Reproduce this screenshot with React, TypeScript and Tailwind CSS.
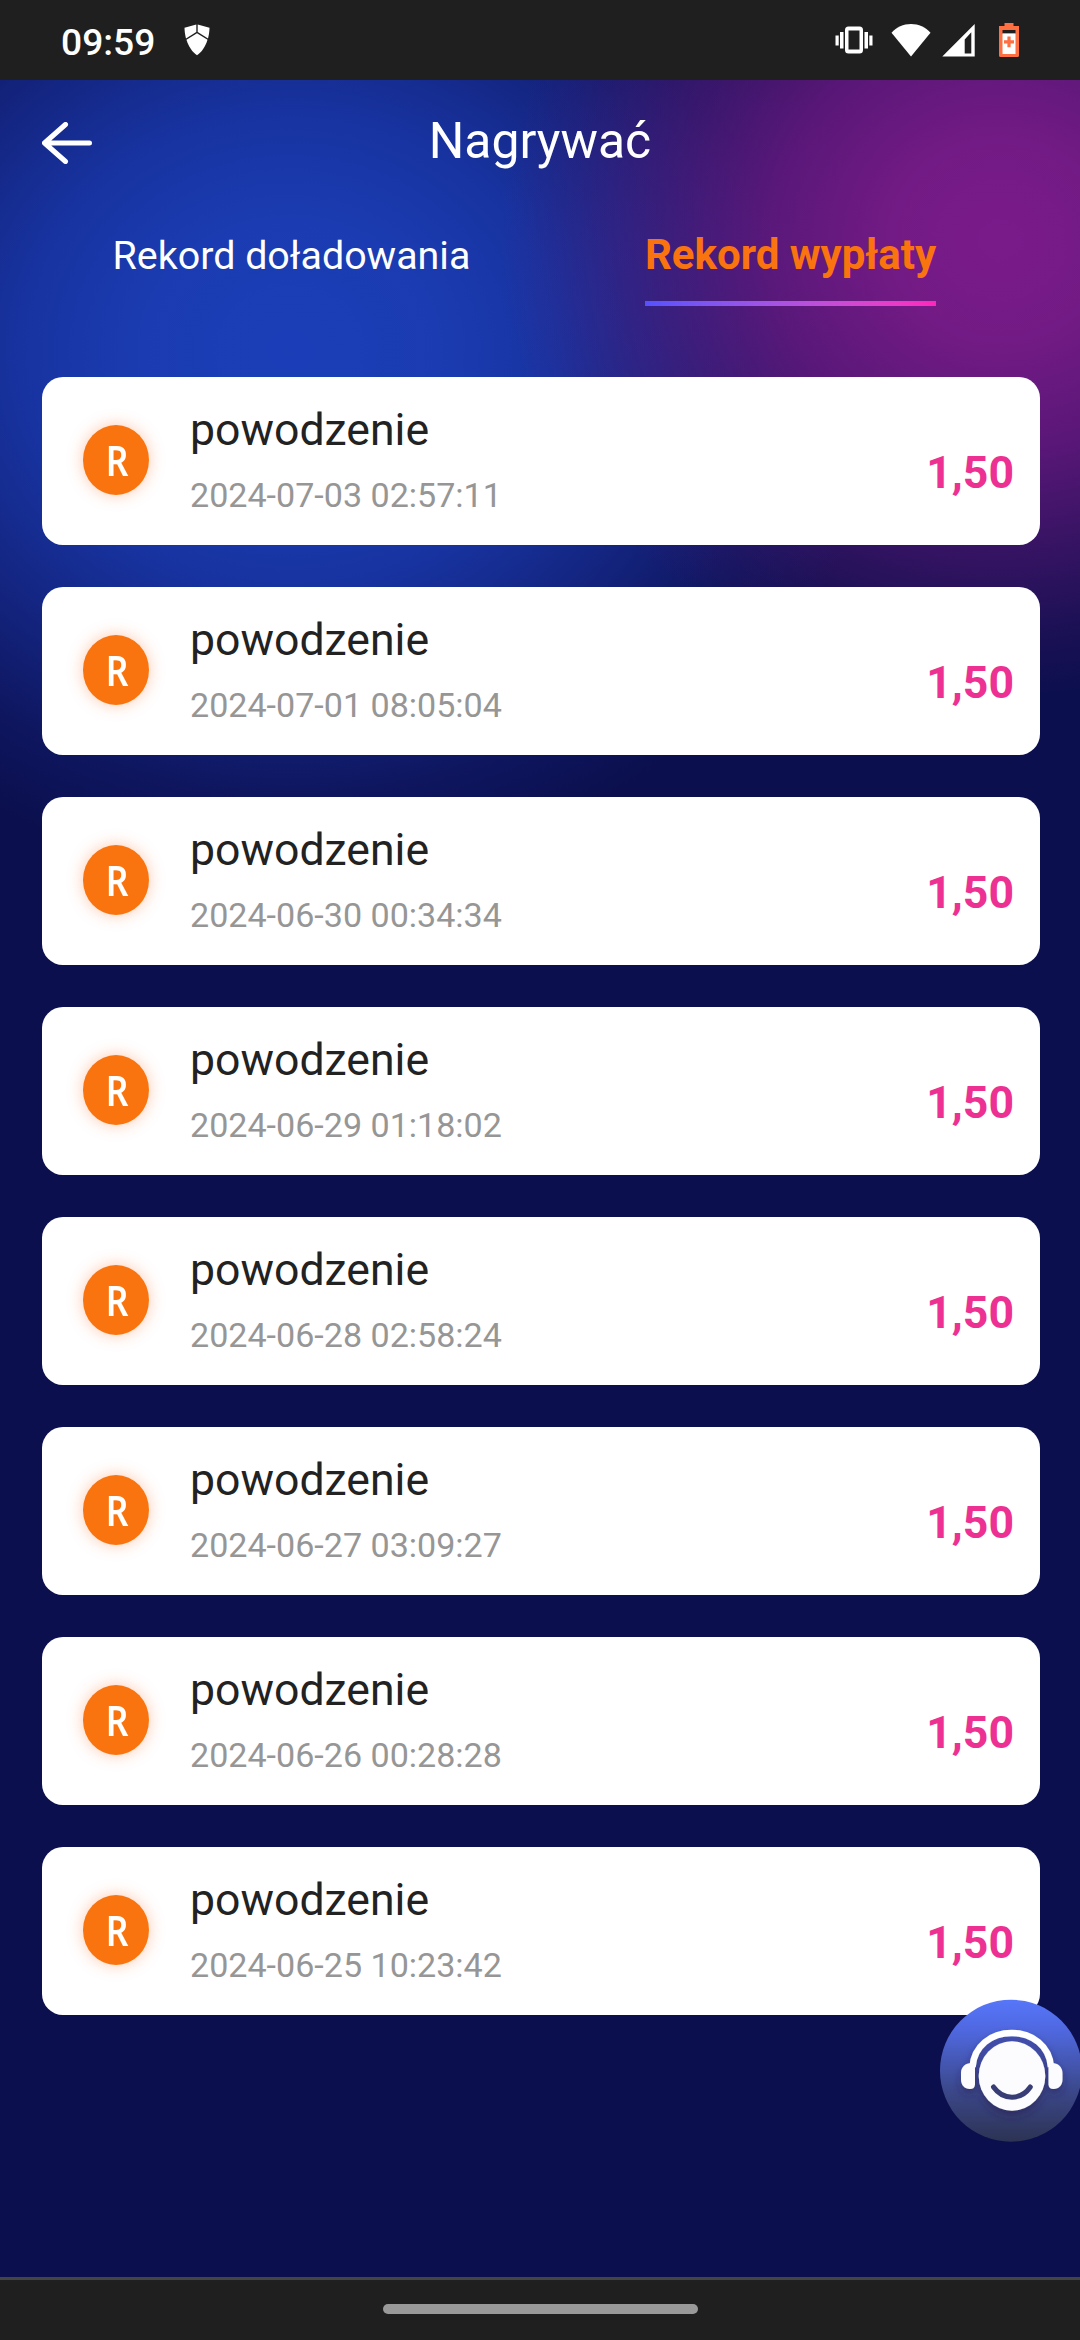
const records = [
  '2024-07-03 02:57:11',
  '2024-07-01 08:05:04',
  '2024-06-30 00:34:34',
  '2024-06-29 01:18:02',
  '2024-06-28 02:58:24',
  '2024-06-27 03:09:27',
  '2024-06-26 00:28:28',
  '2024-06-25 10:23:42',
];

function StatusBar() {
  return (
    <div className="flex h-[80px] shrink-0 items-center bg-[#1f1f1f] pl-[61px] text-white">
      <span className="w-[123px] pt-[3px] text-[37.2px] leading-[80px] font-medium">09:59</span>
      <svg className="h-[32px] w-[26px]" viewBox="0 0 26 32" fill="#fff">
        <path d="M12.3 0.4V8L2 14.4C1 10.800 0.600 7 0.500 3.800Z" />
        <path d="M13.700 0.400V8L24 14.400C25 10.800 25.400 7 25.500 3.800Z" />
        <path d="M13 9.300L23.500 15.700C21.300 23 17.500 28 13 31.300C8.500 28 4.700 23 2.500 15.700Z" />
      </svg>
      <svg className="ml-auto h-[28px] w-[38px]" viewBox="0 0 38 28" fill="#fff">
        <path d="M13.500 0.500h11a3.500 3.500 0 0 1 3.500 3.500v20a3.500 3.500 0 0 1-3.500 3.500h-11a3.500 3.500 0 0 1-3.500-3.500V4a3.500 3.500 0 0 1 3.500-3.500ZM13.500 4.500v19h11V4.500Z" fillRule="evenodd" />
        <rect x="5" y="6" width="3.500" height="16.500" />
        <rect x="0.500" y="9.500" width="3.200" height="10" />
        <rect x="29.500" y="6" width="3.500" height="16.500" />
        <rect x="34.300" y="9.500" width="3.200" height="10" />
      </svg>
      <svg className="ml-[18px] h-[34px] w-[40px]" viewBox="0 0 40 34" fill="#fff">
        <path d="M20 33.500L0.500 9.800C5.500 4.300 12.300 1 20 1S34.500 4.300 39.500 9.800Z" />
      </svg>
      <svg className="ml-[11px] h-[34px] w-[33px]" viewBox="0 0 33 34" fill="#fff">
        <path d="M0.300 33.500L32.700 1V33.500ZM22.700 16.500V30.500H29.300V9.300Z" fillRule="evenodd" />
      </svg>
      <svg className="mr-[61px] ml-[24px] h-[34px] w-[20px]" viewBox="0 0 20 34">
        <path d="M5.500 0h9v3H20v29.500q0 1.500-1.500 1.500h-17Q0 34 0 32.500V3H5.500Z" fill="#fe6f42" />
        <rect x="3.500" y="7" width="13" height="3.500" fill="#1f1f1f" />
        <rect x="3.500" y="10.500" width="13" height="20.500" fill="#fff" />
        <path d="M8.400 13.500h3.200v3.700H15v3.200h-3.400v3.800H8.400v-3.800H5v-3.200h3.400Z" fill="#fe6f42" />
      </svg>
    </div>
  );
}

function Header() {
  return (
    <div className="grid h-[123px] grid-cols-[1fr_auto_1fr] items-center px-[42px] text-white">
      <svg className="mt-[3px] h-[42px] w-[50px]" viewBox="0 0 50 42" fill="none" stroke="#fff" strokeWidth="5" strokeLinecap="round" strokeLinejoin="round">
        <path d="M23.500 2.500L2.500 21L23.500 39.500M4 21H47.500" />
      </svg>
      <h1 className="pb-[2px] text-[49.9px] leading-[60px]">Nagrywać</h1>
    </div>
  );
}

function Tabs() {
  return (
    <div className="mx-[42px] flex h-[103px] w-[998px] text-white">
      <div className="flex flex-1 justify-center text-[39.4px] leading-[105px]">Rekord doładowania</div>
      <div className="flex flex-1 justify-center">
        <div className="flex h-[103px] flex-col text-[42px] leading-[98px] font-bold text-[#f9740e]">
          <span className="h-[98px] pt-[3px]">Rekord wypłaty</span>
          <span className="h-[5px] shrink-0 bg-linear-to-r from-[#5551ff] to-[#ff24bd]" />
        </div>
      </div>
    </div>
  );
}

function RecordCard({ date }: { date: string }) {
  return (
    <div className="flex h-[168px] w-[998px] shrink-0 rounded-[21px] bg-white">
      <div className="mt-[48px] ml-[41px] flex h-[70px] w-[66px] items-center justify-center rounded-[50%] bg-[#f9740e] pl-[3px] font-['Noto_Sans'] text-[41px] leading-[70px] font-semibold text-white shadow-[0_0_16px_rgba(249,100,30,0.35)]">
        <span className="scale-x-[0.86]">R</span>
      </div>
      <div className="ml-[41px] flex flex-1 flex-col pt-[23px]">
        <span className="text-[44.600px] leading-[60px] text-[#222222]">powodzenie</span>
        <span className="mt-[10px] text-[34.1px] leading-[50px] text-[#969696]">{date}</span>
      </div>
      <span className="mt-[66px] mr-[26px] text-[44.600px] leading-[60px] font-bold text-[#ed3192]">1,50</span>
    </div>
  );
}

function SupportButton() {
  return (
    <svg className="absolute top-[1999px] left-[940px] h-[144px] w-[140px]" viewBox="0 0 140 144">
      <defs>
        <linearGradient id="disc" x1="0" y1="0" x2="0" y2="1">
          <stop offset="0" stopColor="#5676f9" />
          <stop offset="0.2" stopColor="#5069e2" />
          <stop offset="0.65" stopColor="#3b4789" />
          <stop offset="1" stopColor="#2c3353" />
        </linearGradient>
        <filter id="shade" x="-20%" y="-20%" width="140%" height="150%">
          <feDropShadow dx="0" dy="5" stdDeviation="4" floodColor="#2a2454" floodOpacity="0.55" />
        </filter>
      </defs>
      <circle cx="71" cy="71.700" r="71" fill="url(#disc)" />
      <g filter="url(#shade)">
        <path d="M32.500 68C34 47 51 34 71.700 34S109.500 47 111 68" fill="none" stroke="#fff" strokeWidth="6.500" />
        <path d="M31.500 64H35V85.500a5 5 0 0 1-5 4.500C24.500 90 21 86 21 80.500V74C21 68 25.500 64 31.500 64Z" fill="#fcfcff" />
        <path d="M112 64H108.500V85.500a5 5 0 0 0 5 4.500C119 90 122.500 86 122.500 80.500V74C122.500 68 118 64 112 64Z" fill="#fcfcff" />
        <ellipse cx="72" cy="77" rx="33.300" ry="34.700" fill="#fcfcfe" />
      </g>
      <path d="M53.500 88C63 101.500 81 101.500 90.300 88" fill="none" stroke="#383d75" strokeWidth="5" strokeLinecap="round" />
    </svg>
  );
}

export default function App() {
  return (
    <div className="relative flex h-[2340px] w-[1080px] flex-col overflow-hidden bg-[#0b0f4d] font-[Roboto,sans-serif]">
      <StatusBar />
      <main className="flex-1 bg-[radial-gradient(ellipse_500px_460px_at_1000px_160px,rgba(122,27,138,1)_0%,rgba(120,27,136,0.95)_22%,rgba(110,25,130,0.8)_45%,rgba(98,24,122,0.5)_67%,rgba(90,22,115,0.2)_86%,rgba(80,20,110,0)_100%),radial-gradient(ellipse_600px_530px_at_290px_270px,rgba(27,62,184,1)_0%,rgba(27,61,181,0.96)_25%,rgba(26,58,176,0.84)_45%,rgba(26,52,165,0.56)_66%,rgba(24,44,150,0.24)_84%,rgba(18,36,120,0)_100%)]">
        <Header />
        <Tabs />
        <div className="mx-[42px] mt-[71px] flex flex-col gap-[42px]">
          {records.map((date) => (
            <RecordCard key={date} date={date} />
          ))}
        </div>
      </main>
      <div className="flex h-[63px] shrink-0 items-center justify-center border-t-[3px] border-[#444444] bg-[#1f1f1f]">
        <div className="mt-[-2px] h-[10px] w-[315px] rounded-full bg-[#999999]" />
      </div>
      <SupportButton />
    </div>
  );
}
